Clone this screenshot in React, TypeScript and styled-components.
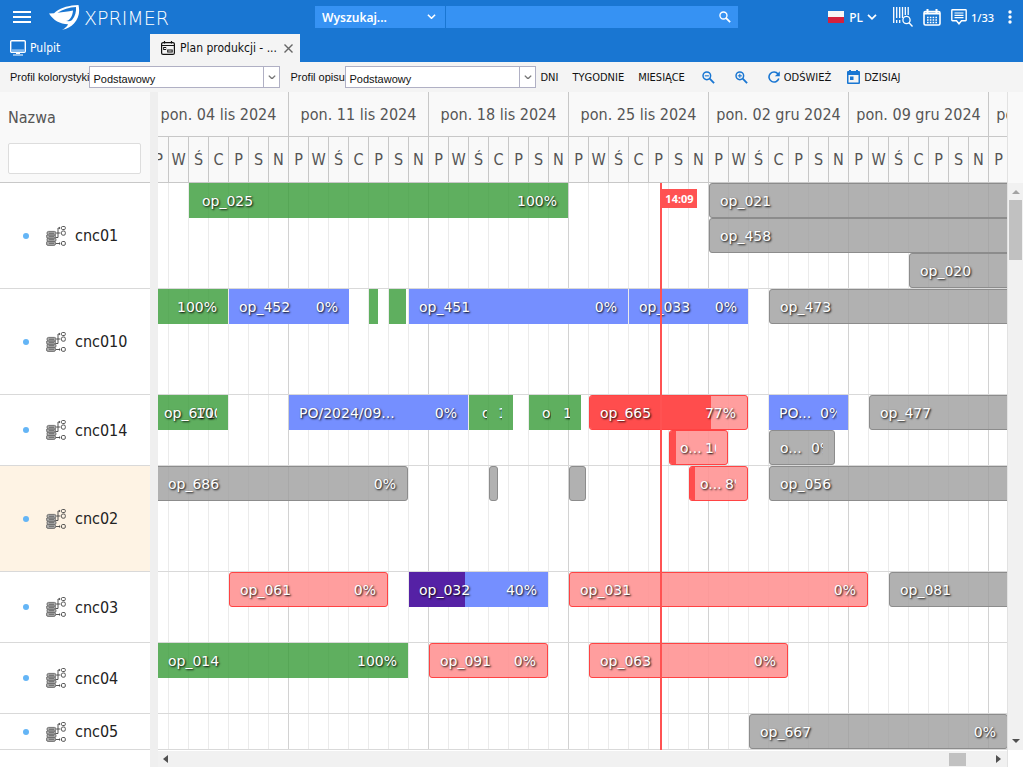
import React from "react";
import styled, { createGlobalStyle, css } from "styled-components";

const UI_FONT = '"DejaVu Sans Condensed", Tahoma, sans-serif';
const FORM_FONT = '"Liberation Sans", Arial, sans-serif';
const DAY = 20;
const SCROLLED = 9;

const GlobalStyle = createGlobalStyle`
  *, *::before, *::after { box-sizing: border-box; }
  body { margin: 0; background: #fff; font-family: ${UI_FONT}; }
  button, input, select { margin: 0; border: 0; padding: 0; background: none; font: inherit; color: inherit; }
  ul { margin: 0; padding: 0; list-style: none; }
  svg { display: block; flex: none; }
`;

const Page = styled.div`
  display: flex;
  flex-direction: column;
  min-height: 100vh;
  overflow: hidden;
`;

/* ---------- top bar ---------- */

const TopBar = styled.header`
  display: flex;
  align-items: center;
  height: 34px;
  background: #1976d2;
  color: #fff;
`;

const Brand = styled.div`
  display: flex;
  align-items: center;
  flex: 0 0 315px;
  padding-left: 13px;
  gap: 18px;
`;

const IconButton = styled.button`
  display: flex;
  align-items: center;
  gap: 4px;
  color: inherit;
`;

const Logo = styled.a`
  display: flex;
  align-items: center;
  gap: 4px;
  color: #fff;
  text-decoration: none;
  font: 200 19px/24px "DejaVu Sans", sans-serif;
`;

const Wordmark = styled.span`
  padding-top: 2px;
`;

const Search = styled.form`
  display: flex;
  flex: 0 1 423px;
  height: 22px;
  gap: 1px;
  color: #fff;
`;

const SearchScope = styled.div`
  position: relative;
  flex: 0 0 130px;
  background: #3692f3;
  select {
    width: 100%;
    height: 22px;
    padding: 0 0 0 7px;
    appearance: none;
    font: 600 12px "Noto Sans", sans-serif;
  }
  svg { position: absolute; right: 9px; top: 8px; pointer-events: none; }
`;

const SearchBox = styled.div`
  display: flex;
  align-items: center;
  flex: 1;
  padding-right: 7px;
  background: #3692f3;
  input { flex: 1; min-width: 0; height: 22px; padding: 0 8px; outline: 0; font-size: 12px; }
`;

const TopActions = styled.nav`
  display: flex;
  align-items: center;
  gap: 10px;
  margin-left: auto;
  padding-right: 11px;
  font: 500 11px "Noto Sans", sans-serif;
`;

const Language = styled(IconButton)`
  margin-right: 6px;
  font-size: 12px;
`;

const Messages = styled(IconButton)`
  margin-right: 4px;
`;

const Flag = styled.span`
  width: 16px;
  height: 12px;
  margin-right: 1px;
  background: linear-gradient(#f6f6f6 50%, #d4213d 50%);
`;

/* ---------- tabs ---------- */

const Tabs = styled.nav`
  display: flex;
  height: 28px;
  background: #1976d2;
`;

const Tab = styled.div<{ $active?: boolean }>`
  display: flex;
  align-items: center;
  flex: 0 0 150px;
  padding: 0 7px 0 ${(p) => (p.$active ? 11 : 10)}px;
  gap: ${(p) => (p.$active ? 5 : 4)}px;
  background: ${(p) => (p.$active ? "#f4f4f4" : "transparent")};
  color: ${(p) => (p.$active ? "#111" : "#fff")};
  font-size: 12px;
  a { flex: 1; color: inherit; text-decoration: none; white-space: nowrap; }
`;

/* ---------- toolbar ---------- */

const Toolbar = styled.div`
  display: flex;
  align-items: center;
  height: 30px;
  padding-left: 10px;
  background: #f4f4f4;
  color: #111;
  font-size: 11px;
  white-space: nowrap;
`;

const Field = styled.div<{ $label: number }>`
  display: flex;
  align-items: center;
  margin-right: 10px;
  font: 11px ${FORM_FONT};
  label { flex: 0 0 ${(p) => p.$label}px; }
`;

const Combo = styled.div`
  position: relative;
  width: 191px;
  height: 22px;
  border: 1px solid #b0b0c4;
  background: #fff;
  select { width: 100%; height: 20px; padding: 3px 20px 0 3px; appearance: none; }
`;

const ComboArrow = styled.span`
  position: absolute;
  top: 0;
  right: 0;
  display: flex;
  align-items: center;
  justify-content: center;
  width: 16px;
  height: 20px;
  border-left: 1px solid #b0b0c4;
  color: #777;
  pointer-events: none;
`;

const Ranges = styled.div`
  display: flex;
  gap: 14px;
  margin-left: -6px;
`;

const ZoomGroup = styled.div`
  display: flex;
  gap: 20px;
  margin: 0 20px 0 17px;
  color: #1976d2;
`;

const Commands = styled.div`
  display: flex;
  gap: 16px;
  svg { color: #1976d2; }
`;

/* ---------- planner ---------- */

const Planner = styled.main`
  display: flex;
  flex: 1;
`;

const Resources = styled.section`
  flex: 0 0 150px;
`;

const ResourceHead = styled.div`
  height: 91px;
  padding: 16px 9px 0 8px;
  border-bottom: 1px solid #c8c8c8;
  background: #f9f9f9;
  color: #555;
  label { display: block; font-size: 16px; line-height: 20px; }
  input {
    display: block;
    width: 100%;
    height: 31px;
    margin-top: 15px;
    padding: 0 6px;
    border: 1px solid #ddd;
    border-radius: 2px;
    background: #fff;
    font-size: 14px;
  }
`;

const ResourceRow = styled.li<{ $lines: number; $marked?: boolean }>`
  display: flex;
  align-items: center;
  height: ${(p) => p.$lines * 35 + 1}px;
  padding-left: 23px;
  border-bottom: 1px solid #d9d9d9;
  background: ${(p) => (p.$marked ? "#fef3e4" : "#fff")};
  color: #222;
  font-size: 16px;
`;

const Dot = styled.span`
  width: 6px;
  height: 6px;
  margin-right: 17px;
  border-radius: 50%;
  background: #64b5f6;
`;

const ResourceName = styled.span`
  margin-left: 9px;
`;

const Splitter = styled.div`
  flex: 0 0 8px;
  background: #efefef;
`;

const Timeline = styled.section`
  display: flex;
  flex-direction: column;
  flex: 1;
  min-width: 0;
  overflow: hidden;
`;

const Scale = styled.div<{ $height: number }>`
  display: flex;
  height: ${(p) => p.$height}px;
  overflow: hidden;
  border-bottom: 1px solid #c8c8c8;
  background: #f9f9f9;
  color: #555;
`;

const ScaleCell = styled.div<{ $days: number }>`
  display: flex;
  align-items: center;
  justify-content: center;
  flex: 0 0 ${(p) => p.$days * DAY}px;
  border-right: 1px solid #c8c8c8;
  font-size: 16px;
  white-space: nowrap;
  &:first-child { margin-left: -${SCROLLED}px; }
`;

const Lanes = styled.div`
  position: relative;
  overflow: hidden;
`;

const Lane = styled.div<{ $lines: number }>`
  position: relative;
  height: ${(p) => p.$lines * 35 + 1}px;
  border-bottom: 1px solid #d9d9d9;
  background:
    repeating-linear-gradient(to right, transparent 0 139px, #d2d2d2 139px 140px) -${SCROLLED}px 0 / 2800px 100%,
    repeating-linear-gradient(to right, transparent 0 19px, #ebebeb 19px 20px) -${SCROLLED}px 0 / 2800px 100%;
`;

type Kind = "done" | "planned" | "late" | "open";

const kinds = {
  done: css`background: rgba(55, 155, 55, 0.8);`,
  planned: css`background: #758fff;`,
  late: css`background: rgba(255, 148, 148, 0.9); border: 1px solid #ff4343; border-radius: 3px;`,
  open: css`background: rgba(158, 158, 158, 0.8); border: 1px solid #8c8c8c; border-radius: 3px;`,
};

const Bar = styled.div<{ $kind: Kind; $line: number; $pad: number; $empty: boolean }>`
  position: absolute;
  top: ${(p) => p.$line * 35}px;
  display: flex;
  align-items: center;
  justify-content: space-between;
  height: 35px;
  padding: ${(p) => (p.$empty ? "0" : `0 11px 0 ${p.$pad}px`)};
  overflow: hidden;
  color: #fff;
  font: 14px/20px "DejaVu Sans", Verdana, sans-serif;
  text-shadow: 1px 1px 2px #000;
  white-space: nowrap;
  ${(p) => kinds[p.$kind]}
`;

const Progress = styled.span<{ $kind: Kind }>`
  position: absolute;
  top: 0;
  bottom: 0;
  left: 0;
  background: ${(p) => (p.$kind === "late" ? "#ff4d4d" : "#5521a5")};
`;

const BarText = styled.span<{ $clip?: number; $over?: boolean }>`
  position: relative;
  flex: none;
  ${(p) => p.$clip !== undefined && css`width: ${p.$clip}px; overflow: hidden;`}
  ${(p) => p.$over && css`margin-left: -20px;`}
`;

const NowLine = styled.div`
  position: absolute;
  top: 0;
  bottom: 0;
  left: 502px;
  width: 2px;
  background: #ff5252;
`;

const NowLabel = styled.time`
  position: absolute;
  top: 6px;
  left: 2px;
  width: 35px;
  background: #ff5252;
  color: #fff;
  font: 700 11px/19px "Noto Sans", sans-serif;
  text-align: center;
`;

const HScroll = styled.div`
  display: flex;
  align-items: center;
  height: 16px;
  margin-top: 1px;
  padding: 0 6px 0 5px;
  background: #f1f1f1;
`;

const HThumb = styled.span`
  width: 17px;
  height: 13px;
  margin: 0 30px 0 auto;
  background: #c1c1c1;
`;

const VColumn = styled.div`
  display: flex;
  flex-direction: column;
  flex: 0 0 16px;
  border-left: 1px solid #e2e2e2;
`;

const VCorner = styled.div`
  height: 91px;
  background: #f9f9f9;
`;

const VScroll = styled.div`
  display: flex;
  flex-direction: column;
  align-items: center;
  height: 567px;
  padding: 7px 0;
  background: #f1f1f1;
`;

const VThumb = styled.span`
  width: 13px;
  height: 60px;
  margin: 6px 0 auto;
  background: #c1c1c1;
`;

/* ---------- drawings ---------- */

const Chevron = ({ size = 10 }: { size?: number }) => (
  <svg width={size} height={size * 0.6} viewBox="0 0 10 6" fill="none" stroke="currentColor" strokeWidth="1.7">
    <path d="M1 .8 5 4.8 9 .8" />
  </svg>
);

const Menu = () => (
  <svg width="18" height="14" viewBox="0 0 18 14" fill="currentColor">
    <path d="M0 1h18v2H0zM0 6h18v2H0zM0 11h18v2H0z" />
  </svg>
);

const LogoMark = () => (
  <svg width="31" height="25" viewBox="0 0 31 25">
    <path fill="#fff" d="M7 6.500C13 2.500 20 .3 29.500 0c1.600 7 .3 13-4.500 18.500-3 3.400-7 5.500-12 6.300 3-1.500 5-3.300 6-5.600C11 19 4.500 15.500 0 8.500L5 8.300z" />
    <path fill="#1976d2" d="M8.500 7.800C14 4.300 20 2.300 27 2c.4 5-.8 9-3.600 12.500-.9 1.200-1.900 1.700-3.400 1.700l-3-.1c3.500-.5 6.500-4 7-10.600C19 6.500 14 7.300 8.500 7.800z" />
  </svg>
);

const Lens = ({ sign, size = 13 }: { sign?: "plus" | "minus"; size?: number }) => (
  <svg width={size} height={size} viewBox="0 0 14 14" fill="none" stroke="currentColor" strokeWidth="1.600">
    <circle cx="5.200" cy="5.200" r="4.100" />
    <path d="M8.300 8.300 13 13" strokeWidth="2" />
    {sign && <path d="M3 5.200h4.400" strokeWidth="1.200" />}
    {sign === "plus" && <path d="M5.200 3v4.400" strokeWidth="1.200" />}
  </svg>
);

const Barcode = () => (
  <svg width="20" height="20" viewBox="0 0 20 20" fill="none" stroke="currentColor" strokeWidth="1.300">
    <path d="M.7 0v16M3.700 0v11M6.700 0v11M9.500 0v11M12.300 0v8M15.200 0v8M3.700 13v3M6.700 13v3" />
    <circle cx="13.500" cy="13" r="3.600" />
    <path d="m16 15.700 3.500 3.800" />
  </svg>
);

const CalendarGrid = () => (
  <svg width="18" height="17" viewBox="0 0 18 17" fill="none" stroke="currentColor">
    <rect x="1" y="2.500" width="16" height="13.500" rx="1.500" strokeWidth="1.600" />
    <path d="M4.500 0v4M13.500 0v4M1 4.500h16" strokeWidth="2" />
    <path d="M4 8.500h10M4 11h10M4 13.500h10" strokeWidth="1.500" strokeDasharray="1.600 1.200" />
  </svg>
);

const Comment = () => (
  <svg width="16" height="16" viewBox="0 0 16 16" fill="none" stroke="currentColor" strokeWidth="1.400">
    <path d="M1.500.8h13q.7 0 .7.700v9.500q0 .700-.7.700h-4L8 14.800l-2.500-3.100h-4q-.7 0-.7-.7V1.500q0-.7.7-.7z" />
    <path d="M3.500 4h9M3.500 6.300h9M3.500 8.600h9" strokeWidth="1.200" />
  </svg>
);

const Dots = () => (
  <svg width="4" height="14" viewBox="0 0 4 14" fill="currentColor">
    <circle cx="2" cy="2" r="1.700" /><circle cx="2" cy="7" r="1.700" /><circle cx="2" cy="12" r="1.700" />
  </svg>
);

const Monitor = () => (
  <svg width="16" height="16" viewBox="0 0 16 16" fill="none" stroke="#fff">
    <rect x=".7" y=".7" width="14.600" height="11.600" rx="1" strokeWidth="1.400" />
    <path d="M1.400 10.500h13.200" stroke="#7fb8ef" strokeWidth="2.500" />
    <path d="M3 15h10M6 13.500h4" strokeWidth="1.200" />
  </svg>
);

const PlanIcon = () => (
  <svg width="14" height="14" viewBox="0 0 14 14" fill="none" stroke="#111" strokeWidth="1.200">
    <rect x=".6" y="1.600" width="12.800" height="11.800" rx="1.500" />
    <path d="M.6 4.500h12.800M3.500 0v2.500M10.500 0v2.500" />
    <rect x="2.700" y="6.500" width="2" height="2" strokeWidth="1" /><rect x="6.700" y="9" width="4.500" height="2" strokeWidth="1" />
  </svg>
);

const Close = () => (
  <svg width="9" height="9" viewBox="0 0 9 9" stroke="#666" strokeWidth="1.400"><path d="m.5.5 8 8m0-8-8 8" /></svg>
);

const Refresh = () => (
  <svg width="12" height="12" viewBox="0 0 12 12" fill="none" stroke="currentColor" strokeWidth="1.600">
    <path d="M10 3A5 5 0 1 0 10.800 7.500" /><path d="M11.800.3v4.900H6.900z" fill="currentColor" stroke="none" />
  </svg>
);

const Today = () => (
  <svg width="13" height="14" viewBox="0 0 13 14" fill="currentColor">
    <path fillRule="evenodd" d="M2 1V0h2v1h5V0h2v1h1q1 0 1 1v11q0 1-1 1H1q-1 0-1-1V2q0-1 1-1zM1.500 5v7.500h10V5zM3 6.500h3.500V10H3z" />
  </svg>
);

const Machine = () => (
  <svg width="20" height="20" viewBox="0 0 20 20" fill="none" stroke="#444" strokeWidth=".9">
    <g fill="#aaa" stroke="#666">
      <rect x=".5" y="15.200" width="9" height="4.200" rx="1.600" />
      <rect x="1" y="11.800" width="9" height="3.800" rx="1.600" />
      <rect x=".5" y="8.600" width="9" height="3.600" rx="1.600" />
      <rect x="1" y="5.400" width="9" height="3.600" rx="1.600" />
    </g>
    <path d="M3 7.300h5M3 10.400h5M3 13.700h5M3 17.300h5" stroke="#777" strokeWidth="1.200" />
    <path d="M9.500 11.500h2.500V2H14M10.500 7h4M10 17.500h4" />
    <path d="m13 1 1.200 1L13 3M13 16.500l1.200 1-1.200 1" strokeWidth=".8" />
    <rect x="15.500" y=".5" width="3.800" height="3" rx="1" /><rect x="15.500" y="5" width="3.800" height="4.200" rx="1.400" />
    <rect x="15.500" y="15.500" width="3.800" height="3.800" rx="1.200" />
  </svg>
);

const Arrow = ({ d, color = "#505050", tall }: { d: string; color?: string; tall?: boolean }) => (
  <svg width={tall ? 5 : 8} height={tall ? 8 : 4} fill={color}><path d={d} /></svg>
);

/* ---------- data ---------- */

interface Task {
  x: number;
  w: number;
  kind: Kind;
  line?: number;
  name?: string;
  pct?: string;
  progress?: number;
  pad?: number;
  clipName?: number;
  clipPct?: number;
  over?: boolean;
}

interface Resource {
  name: string;
  lines: number;
  marked?: boolean;
  tasks: Task[];
}

const resources: Resource[] = [
  {
    name: "cnc01", lines: 3, tasks: [
      { x: 31, w: 379, kind: "done", name: "op_025", pct: "100%", pad: 13 },
      { x: 551, w: 640, kind: "open", name: "op_021" },
      { x: 551, w: 640, kind: "open", name: "op_458", line: 1 },
      { x: 751, w: 440, kind: "open", name: "op_020", line: 2 },
    ],
  },
  {
    name: "cnc010", lines: 3, tasks: [
      { x: 0, w: 70, kind: "done", name: "", pct: "100%" },
      { x: 71, w: 120, kind: "planned", name: "op_452", pct: "0%" },
      { x: 211, w: 9, kind: "done" },
      { x: 231, w: 17, kind: "done" },
      { x: 251, w: 219, kind: "planned", name: "op_451", pct: "0%" },
      { x: 471, w: 119, kind: "planned", name: "op_033", pct: "0%" },
      { x: 611, w: 580, kind: "open", name: "op_473" },
    ],
  },
  {
    name: "cnc014", lines: 2, tasks: [
      { x: 0, w: 70, kind: "done", name: "op_671", pct: "100%", pad: 6, clipPct: 21, over: true },
      { x: 131, w: 179, kind: "planned", name: "PO/2024/09...", pct: "0%" },
      { x: 311, w: 44, kind: "done", name: "op", pct: "100%", pad: 13, clipName: 5, clipPct: 4 },
      { x: 371, w: 52, kind: "done", name: "op", pct: "100%", pad: 13, clipName: 9, clipPct: 7 },
      { x: 431, w: 159, kind: "late", name: "op_665", pct: "77%", progress: 77 },
      { x: 611, w: 79, kind: "planned", name: "PO...", pct: "0%", clipPct: 17 },
      { x: 711, w: 480, kind: "open", name: "op_477" },
      { x: 511, w: 59, kind: "late", line: 1, name: "o...", pct: "10%", progress: 11, clipPct: 11 },
      { x: 611, w: 66, kind: "open", line: 1, name: "o...", pct: "0%", clipPct: 12 },
    ],
  },
  {
    name: "cnc02", lines: 3, marked: true, tasks: [
      { x: -10, w: 260, kind: "open", name: "op_686", pct: "0%", pad: 19 },
      { x: 331, w: 9, kind: "open" },
      { x: 411, w: 17, kind: "open" },
      { x: 531, w: 59, kind: "late", name: "o...", pct: "8%", progress: 9, clipPct: 11 },
      { x: 611, w: 580, kind: "open", name: "op_056" },
    ],
  },
  {
    name: "cnc03", lines: 2, tasks: [
      { x: 71, w: 159, kind: "late", name: "op_061", pct: "0%" },
      { x: 251, w: 139, kind: "planned", name: "op_032", pct: "40%", progress: 40 },
      { x: 411, w: 299, kind: "late", name: "op_031", pct: "0%" },
      { x: 731, w: 460, kind: "open", name: "op_081" },
    ],
  },
  {
    name: "cnc04", lines: 2, tasks: [
      { x: 0, w: 250, kind: "done", name: "op_014", pct: "100%" },
      { x: 271, w: 119, kind: "late", name: "op_091", pct: "0%" },
      { x: 431, w: 199, kind: "late", name: "op_063", pct: "0%" },
    ],
  },
  {
    name: "cnc05", lines: 1, tasks: [{ x: 591, w: 259, kind: "open", name: "op_667", pct: "0%" }],
  },
];

const weeks = ["04 lis", "11 lis", "18 lis", "25 lis", "02 gru", "09 gru", "16 gru"];
const days = ["P", "W", "Ś", "C", "P", "S", "N"];

const TaskBar = ({ task }: { task: Task }) => (
  <Bar
    $kind={task.kind}
    $line={task.line ?? 0}
    $pad={task.pad ?? 10}
    $empty={task.name === undefined}
    style={{ left: task.x, width: task.w }}
  >
    {task.progress !== undefined && <Progress $kind={task.kind} style={{ width: `${task.progress}%` }} />}
    {task.name !== undefined && <BarText $clip={task.clipName}>{task.name}</BarText>}
    {task.pct && <BarText $clip={task.clipPct} $over={task.over}>{task.pct}</BarText>}
  </Bar>
);

const ComboField = ({ id, label, width }: { id: string; label: string; width: number }) => (
  <Field $label={width}>
    <label htmlFor={id}>{label}</label>
    <Combo>
      <select id={id}><option>Podstawowy</option></select>
      <ComboArrow><Chevron size={8} /></ComboArrow>
    </Combo>
  </Field>
);

export default function App() {
  return (
    <Page>
      <GlobalStyle />
      <TopBar>
        <Brand>
          <IconButton aria-label="Menu"><Menu /></IconButton>
          <Logo href="#"><LogoMark /><Wordmark>XPRIMER</Wordmark></Logo>
        </Brand>
        <Search>
          <SearchScope>
            <select aria-label="Zakres"><option>Wyszukaj...</option></select>
            <Chevron size={9} />
          </SearchScope>
          <SearchBox>
            <input type="text" aria-label="Szukaj" />
            <IconButton type="button" aria-label="Szukaj"><Lens size={12} /></IconButton>
          </SearchBox>
        </Search>
        <TopActions>
          <Language><Flag />PL<Chevron /></Language>
          <IconButton aria-label="Skaner"><Barcode /></IconButton>
          <IconButton aria-label="Kalendarz"><CalendarGrid /></IconButton>
          <Messages><Comment />1/33</Messages>
          <IconButton aria-label="Opcje"><Dots /></IconButton>
        </TopActions>
      </TopBar>
      <Tabs>
        <Tab><Monitor /><a href="#">Pulpit</a></Tab>
        <Tab $active>
          <PlanIcon /><a href="#">Plan produkcji - ...</a>
          <IconButton aria-label="Zamknij"><Close /></IconButton>
        </Tab>
      </Tabs>
      <Toolbar>
        <ComboField id="colors" label="Profil kolorystyki" width={79} />
        <ComboField id="description" label="Profil opisu" width={55} />
        <Ranges>
          <IconButton>DNI</IconButton>
          <IconButton>TYGODNIE</IconButton>
          <IconButton>MIESIĄCE</IconButton>
        </Ranges>
        <ZoomGroup>
          <IconButton aria-label="Pomniejsz"><Lens sign="minus" /></IconButton>
          <IconButton aria-label="Powiększ"><Lens sign="plus" /></IconButton>
        </ZoomGroup>
        <Commands>
          <IconButton><Refresh />ODŚWIEŻ</IconButton>
          <IconButton><Today />DZISIAJ</IconButton>
        </Commands>
      </Toolbar>
      <Planner>
        <Resources>
          <ResourceHead>
            <label htmlFor="name">Nazwa</label>
            <input id="name" type="text" />
          </ResourceHead>
          <ul>
            {resources.map((r) => (
              <ResourceRow key={r.name} $lines={r.lines} $marked={r.marked}>
                <Dot /><Machine /><ResourceName>{r.name}</ResourceName>
              </ResourceRow>
            ))}
          </ul>
        </Resources>
        <Splitter />
        <Timeline>
          <Scale $height={45}>
            {weeks.map((w) => <ScaleCell key={w} $days={7}>pon. {w} 2024</ScaleCell>)}
          </Scale>
          <Scale $height={46}>
            {weeks.flatMap((w) => days.map((d, i) => <ScaleCell key={w + i} $days={1}>{d}</ScaleCell>))}
          </Scale>
          <Lanes>
            {resources.map((r) => (
              <Lane key={r.name} $lines={r.lines}>
                {r.tasks.map((t, i) => <TaskBar key={i} task={t} />)}
              </Lane>
            ))}
            <NowLine><NowLabel>14:09</NowLabel></NowLine>
          </Lanes>
          <HScroll>
            <Arrow tall d="M5 0v8L0 4z" />
            <HThumb />
            <Arrow tall d="M0 0v8l5-4z" />
          </HScroll>
        </Timeline>
        <VColumn>
          <VCorner />
          <VScroll>
            <Arrow d="M0 4h8L4 0z" color="#a3a3a3" />
            <VThumb />
            <Arrow d="M0 0h8L4 4z" />
          </VScroll>
        </VColumn>
      </Planner>
    </Page>
  );
}
